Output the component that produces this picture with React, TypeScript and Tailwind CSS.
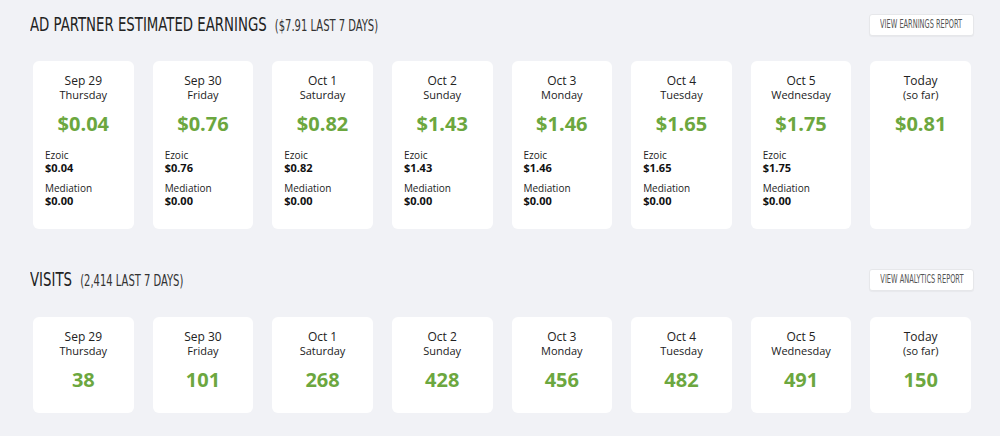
import React from "react";

const earnings = [
  { date: "Sep 29", day: "Thursday", total: "$0.04", ezoic: "$0.04", med: "$0.00" },
  { date: "Sep 30", day: "Friday", total: "$0.76", ezoic: "$0.76", med: "$0.00" },
  { date: "Oct 1", day: "Saturday", total: "$0.82", ezoic: "$0.82", med: "$0.00" },
  { date: "Oct 2", day: "Sunday", total: "$1.43", ezoic: "$1.43", med: "$0.00" },
  { date: "Oct 3", day: "Monday", total: "$1.46", ezoic: "$1.46", med: "$0.00" },
  { date: "Oct 4", day: "Tuesday", total: "$1.65", ezoic: "$1.65", med: "$0.00" },
  { date: "Oct 5", day: "Wednesday", total: "$1.75", ezoic: "$1.75", med: "$0.00" },
  { date: "Today", day: "(so far)", total: "$0.81", ezoic: "", med: "" },
];

const visits = [
  { date: "Sep 29", day: "Thursday", total: "38" },
  { date: "Sep 30", day: "Friday", total: "101" },
  { date: "Oct 1", day: "Saturday", total: "268" },
  { date: "Oct 2", day: "Sunday", total: "428" },
  { date: "Oct 3", day: "Monday", total: "456" },
  { date: "Oct 4", day: "Tuesday", total: "482" },
  { date: "Oct 5", day: "Wednesday", total: "491" },
  { date: "Today", day: "(so far)", total: "150" },
];

const cond = { fontFamily: '"DejaVu Sans Condensed", "Liberation Sans", sans-serif' };

function Header({ title, sub, button }: { title: string; sub: string; button: string }) {
  return (
    <div className="flex items-center justify-between pl-[30px] pr-[26px] h-[24px]">
      <div className="flex items-baseline text-[#222] whitespace-nowrap origin-left scale-x-[0.74]" style={cond}>
        <span className="text-[20px] leading-[24px]">{title}</span>
        <span className="text-[15px] ml-[11px] text-[#333]">{sub}</span>
      </div>
      <button
        className="bg-white border border-[#e6e7ea] rounded-[3px] h-[22px] w-[105px] flex items-center justify-center text-[#555] uppercase shadow-[0_1px_1px_rgba(0,0,0,0.04)]"
      >
        <span className="inline-block whitespace-nowrap text-[11.5px] scale-x-[0.64]" style={cond}>
          {button}
        </span>
      </button>
    </div>
  );
}

export default function App() {
  return (
    <div className="w-[1000px] h-[436px] bg-[#f1f2f6] overflow-hidden" style={{ fontFamily: '"Open Sans", sans-serif' }}>
      <div className="pt-[13px]">
        <Header title="AD PARTNER ESTIMATED EARNINGS" sub="($7.91 LAST 7 DAYS)" button="View Earnings Report" />
      </div>
      <div className="grid grid-cols-8 gap-[19px] pl-[33px] pr-[29px] mt-[24px]">
        {earnings.map((e) => (
          <div key={e.date} className="bg-white rounded-[6px] h-[168px] pt-[12px] text-center text-[#222]">
            <div className="text-[12px] leading-[15px]">{e.date}</div>
            <div className="text-[11px] leading-[14px]">{e.day}</div>
            <div className="text-[20px] leading-[24px] mt-[10px] font-bold text-[#6ca73f]">{e.total}</div>
            {e.ezoic && (
              <div className="text-left px-[12px] mt-[13px]">
                <div className="text-[10px] leading-[13px]">Ezoic</div>
                <div className="text-[11px] leading-[12px] font-bold text-[#111]">{e.ezoic}</div>
                <div className="text-[10px] leading-[13px] mt-[8px]">Mediation</div>
                <div className="text-[11px] leading-[12px] font-bold text-[#111]">{e.med}</div>
              </div>
            )}
          </div>
        ))}
      </div>
      <div className="mt-[39px]">
        <Header title="VISITS" sub="(2,414 LAST 7 DAYS)" button="View Analytics Report" />
      </div>
      <div className="grid grid-cols-8 gap-[19px] pl-[33px] pr-[29px] mt-[25px]">
        {visits.map((e) => (
          <div key={e.date} className="bg-white rounded-[6px] h-[96px] pt-[12px] text-center text-[#222]">
            <div className="text-[12px] leading-[15px]">{e.date}</div>
            <div className="text-[11px] leading-[14px]">{e.day}</div>
            <div className="text-[20px] leading-[24px] mt-[10px] font-bold text-[#6ca73f]">{e.total}</div>
          </div>
        ))}
      </div>
    </div>
  );
}
